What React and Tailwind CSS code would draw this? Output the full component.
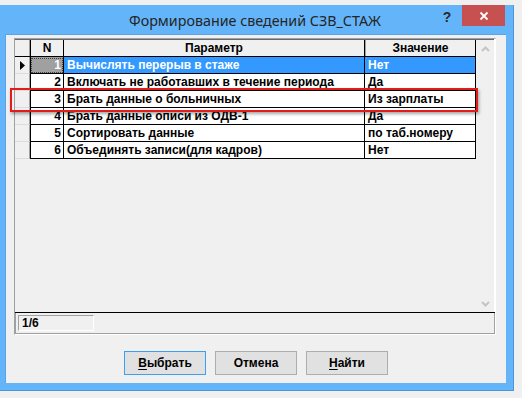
import { useState } from 'react'

const rows = [
  { n: 1, param: 'Вычислять перерыв в стаже', value: 'Нет' },
  { n: 2, param: 'Включать не работавших в течение периода', value: 'Да' },
  { n: 3, param: 'Брать данные о больничных', value: 'Из зарплаты' },
  { n: 4, param: 'Брать данные описи из ОДВ-1', value: 'Да' },
  { n: 5, param: 'Сортировать данные', value: 'по таб.номеру' },
  { n: 6, param: 'Объединять записи(для кадров)', value: 'Нет' },
]

function Chevron({ down }) {
  return (
    <svg width="9" height="6" viewBox="0 0 9 6" className="text-[#c4c4c4]">
      <path d={down ? 'M1 1 L4.5 4.5 L8 1' : 'M1 5 L4.5 1.5 L8 5'} fill="none" stroke="currentColor" strokeWidth="2" />
    </svg>
  )
}

function Btn({ children, primary }) {
  return (
    <button
      className={
        'w-[82px] h-[24px] bg-[#e1e1e1] text-[12px] font-bold text-black border ' +
        (primary ? 'border-[#3c9ff2]' : 'border-[#adadad]')
      }
    >
      {children}
    </button>
  )
}

export default function App() {
  const [selected] = useState(1)

  return (
    <div className="w-[522px] h-[398px] bg-[#f0f0f0] pt-[5px] overflow-hidden relative" style={{ fontFamily: '"Liberation Sans", Arial, sans-serif' }}>
      <div className="w-[514px] h-[386px] bg-[#64b4fa] flex flex-col border-r border-b border-[#4d95d8]">
        {/* title bar */}
        <div className="h-[29px] flex items-start shrink-0">
          <div className="flex-1 pl-[71px] text-center pt-[6px] text-[14.3px] leading-[20px] text-[#252525]" style={{ fontFamily: '"Noto Sans", sans-serif' }}>
            Формирование сведений СЗВ_СТАЖ
          </div>
          <div className="w-[16px] pt-[4px] text-center text-[14px] font-bold text-[#2a2a2a] leading-[16px]">?</div>
          <div className="ml-[7px] mr-[8px] w-[43px] h-[21px] bg-[#c75050] flex items-center justify-center">
            <svg width="10" height="10" viewBox="0 0 10 10">
              <path d="M1.5 1.5 L8.5 8.5 M8.5 1.5 L1.5 8.5" stroke="#fff" strokeWidth="1.8" />
            </svg>
          </div>
        </div>

        {/* client area */}
        <div className="flex-1 ml-[5px] mr-[7px] mb-[7px] bg-[#f0f0f0] flex flex-col relative border-l border-t border-[#5aa3e6]">
          <div className="mt-[3px] ml-[8px] w-[482px] h-[297px] border border-t-[#a0a0a0] border-l-[#a0a0a0] border-r-white border-b-white flex flex-col">
            <div className="flex-1 flex min-h-0">
              {/* grid */}
              <div className="w-[461px] flex flex-col text-[12px] font-bold leading-[16px] text-black">
                {/* header */}
                <div className="h-[18px] flex border-t border-[#696969] border-b border-b-black bg-[#f0f0f0] shrink-0">
                  <div className="w-[15px] border-r border-[#a0a0a0]" />
                  <div className="w-[34px] border-l border-l-black border-r border-r-black text-center">N</div>
                  <div className="w-[301px] border-r border-black text-center">Параметр</div>
                  <div className="w-[111px] border-l border-l-[#a0a0a0] border-r border-r-black text-center">Значение</div>
                </div>
                {rows.map((r) => {
                  const sel = r.n === selected
                  return (
                    <div key={r.n} className="h-[17px] flex shrink-0">
                      <div className="w-[15px] border-r border-[#a0a0a0] border-b border-b-[#dcdcdc] bg-[#f0f0f0] flex items-center pl-[5px]">
                        {sel && (
                          <svg width="5" height="9" viewBox="0 0 5 9">
                            <path d="M0 0 L5 4.5 L0 9 Z" fill="#000" />
                          </svg>
                        )}
                      </div>
                      <div
                        className={
                          'w-[34px] border-l border-l-black border-r border-r-black border-b border-b-black pr-[2px] text-right ' +
                          (sel ? 'bg-[#a0a0a0] text-white outline-1 outline-dotted outline-[#404040] -outline-offset-2' : 'bg-white')
                        }
                      >
                        {r.n}
                      </div>
                      <div
                        className={
                          'w-[301px] border-r border-black border-b pl-[3px] whitespace-nowrap overflow-hidden ' +
                          (sel ? 'bg-[#3399ff] text-white' : 'bg-white')
                        }
                      >
                        {r.param}
                      </div>
                      <div
                        className={
                          'w-[111px] border-r border-black border-b pl-[3px] whitespace-nowrap overflow-hidden ' +
                          (sel ? 'bg-[#3399ff] text-white' : 'bg-white')
                        }
                      >
                        {r.value}
                      </div>
                    </div>
                  )
                })}
                <div className="flex-1 bg-[#f0f0f0]" />
              </div>
              {/* scrollbar */}
              <div className="w-[18px] bg-[#f0f0f0] border-t border-[#696969] flex flex-col items-center justify-between pt-[6px] pb-[5px]">
                <Chevron />
                <Chevron down />
              </div>
              <div className="w-[1px] bg-white" />
            </div>
            <div className="h-[1px] bg-black shrink-0" />
            <div className="h-[21px] shrink-0 border-l border-b border-r border-[#a0a0a0] flex items-center pl-[2px]">
              <div className="w-[76px] h-[16px] border border-t-[#a0a0a0] border-l-[#a0a0a0] border-r-white border-b-white text-[12px] font-bold leading-[14px] pl-[3px]">
                1/6
              </div>
            </div>
          </div>

          {/* buttons */}
          <div className="mt-[16px] flex justify-center gap-[9px]">
            <Btn primary>
              <span className="underline underline-offset-2">В</span>ыбрать
            </Btn>
            <Btn>Отмена</Btn>
            <Btn>
              <span className="underline underline-offset-2">Н</span>айти
            </Btn>
          </div>

          {/* red highlight box */}
          <div className="absolute left-[4px] top-[53px] w-[468px] h-[24px] border-2 border-[#e31b1b] shadow-[1px_2px_3px_rgba(0,0,0,0.35)] pointer-events-none" />
        </div>
      </div>
    </div>
  )
}
